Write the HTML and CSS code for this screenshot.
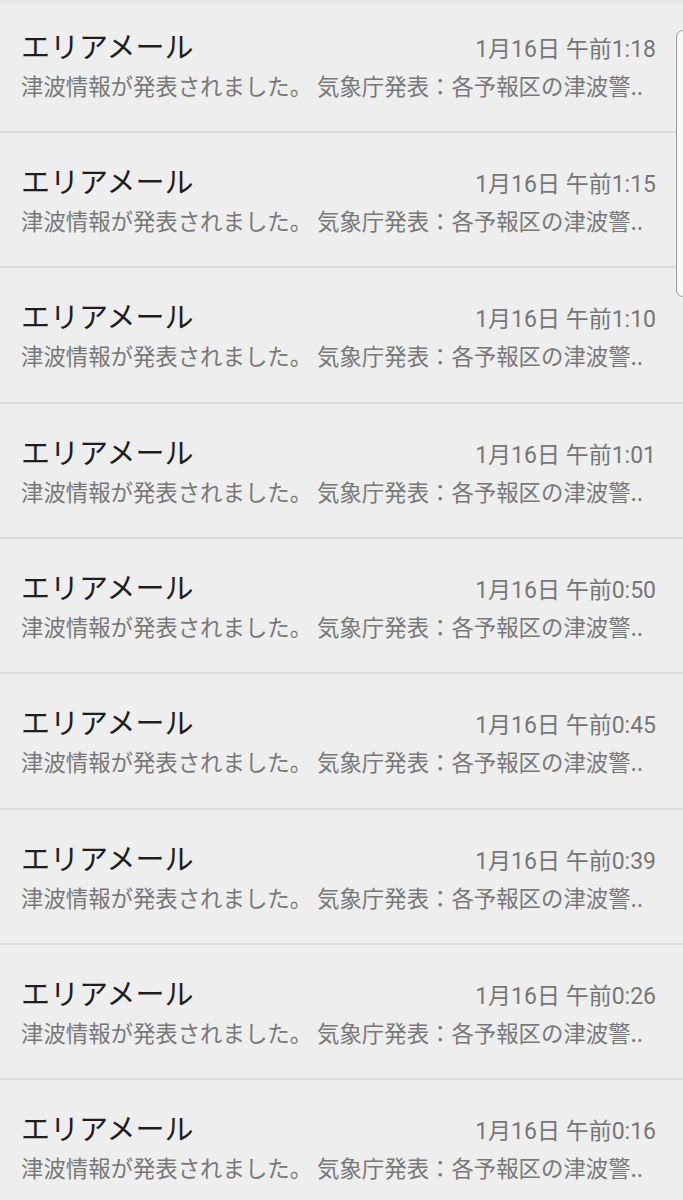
FILE: index.html
```html
<!DOCTYPE html>
<html lang="ja">
<head>
  <meta charset="UTF-8" />
  <meta name="viewport" content="width=device-width, initial-scale=1.0" />
  <title>エリアメール</title>
  <link rel="stylesheet" href="styles.css">
</head>
<body>
  <div class="top-shade"></div>
  <div class="scroll-thumb"></div>

  <ul class="msg-list">
    <li class="msg">
      <div class="msg-head"><span class="msg-title">エリアメール</span><span class="msg-time">1月16日 午前1:18</span></div>
      <div class="msg-body">津波情報が発表されました。 気象庁発表：各予報区の津波警..</div>
    </li>
    <li class="msg">
      <div class="msg-head"><span class="msg-title">エリアメール</span><span class="msg-time">1月16日 午前1:15</span></div>
      <div class="msg-body">津波情報が発表されました。 気象庁発表：各予報区の津波警..</div>
    </li>
    <li class="msg">
      <div class="msg-head"><span class="msg-title">エリアメール</span><span class="msg-time">1月16日 午前1:10</span></div>
      <div class="msg-body">津波情報が発表されました。 気象庁発表：各予報区の津波警..</div>
    </li>
    <li class="msg">
      <div class="msg-head"><span class="msg-title">エリアメール</span><span class="msg-time">1月16日 午前1:01</span></div>
      <div class="msg-body">津波情報が発表されました。 気象庁発表：各予報区の津波警..</div>
    </li>
    <li class="msg">
      <div class="msg-head"><span class="msg-title">エリアメール</span><span class="msg-time">1月16日 午前0:50</span></div>
      <div class="msg-body">津波情報が発表されました。 気象庁発表：各予報区の津波警..</div>
    </li>
    <li class="msg">
      <div class="msg-head"><span class="msg-title">エリアメール</span><span class="msg-time">1月16日 午前0:45</span></div>
      <div class="msg-body">津波情報が発表されました。 気象庁発表：各予報区の津波警..</div>
    </li>
    <li class="msg">
      <div class="msg-head"><span class="msg-title">エリアメール</span><span class="msg-time">1月16日 午前0:39</span></div>
      <div class="msg-body">津波情報が発表されました。 気象庁発表：各予報区の津波警..</div>
    </li>
    <li class="msg">
      <div class="msg-head"><span class="msg-title">エリアメール</span><span class="msg-time">1月16日 午前0:26</span></div>
      <div class="msg-body">津波情報が発表されました。 気象庁発表：各予報区の津波警..</div>
    </li>
    <li class="msg">
      <div class="msg-head"><span class="msg-title">エリアメール</span><span class="msg-time">1月16日 午前0:16</span></div>
      <div class="msg-body">津波情報が発表されました。 気象庁発表：各予報区の津波警..</div>
    </li>
  </ul>
</body>
</html>
```

FILE: styles.css
```css
body, html {
  margin: 0;
  padding: 0;
  height: 100%;
  overflow: hidden;
  background: #eeeeee;
  font-family: "Noto Sans CJK JP", "Noto Sans", sans-serif;
}

.top-shade {
  position: fixed;
  top: 0;
  left: 0;
  right: 0;
  height: 5px;
  background: linear-gradient(#e2e2e2, #eaeaea 70%, #eeeeee);
  z-index: 2;
}

.scroll-thumb {
  position: fixed;
  top: 30px;
  left: 676px;
  width: 14px;
  height: 265px;
  border: 1px solid #9a9a9a;
  border-radius: 7px;
  background: #fafafa;
  z-index: 2;
}

.msg-list {
  list-style: none;
  margin: -2.33px 0 0 0;
  padding: 0;
}

.msg {
  height: 133.33px;
  box-sizing: content-box;
  border-bottom: 2px solid #dadada;
  padding: 0 27px 0 21px;
  display: flex;
  flex-direction: column;
}

.msg-head {
  display: flex;
  align-items: baseline;
  justify-content: space-between;
  margin-top: 30px;
  height: 34px;
}

.msg-title {
  font-size: 29px;
  line-height: 34px;
  color: #1e1e1e;
}

.msg-time {
  position: relative;
  top: -1px;
  font-family: Roboto, "Noto Sans CJK JP", sans-serif;
  font-size: 23px;
  line-height: 34px;
  color: #767676;
}

.msg-body {
  margin-top: 8px;
  font-size: 22.4px;
  line-height: 30px;
  color: #787878;
  white-space: nowrap;
  overflow: hidden;
}
```
